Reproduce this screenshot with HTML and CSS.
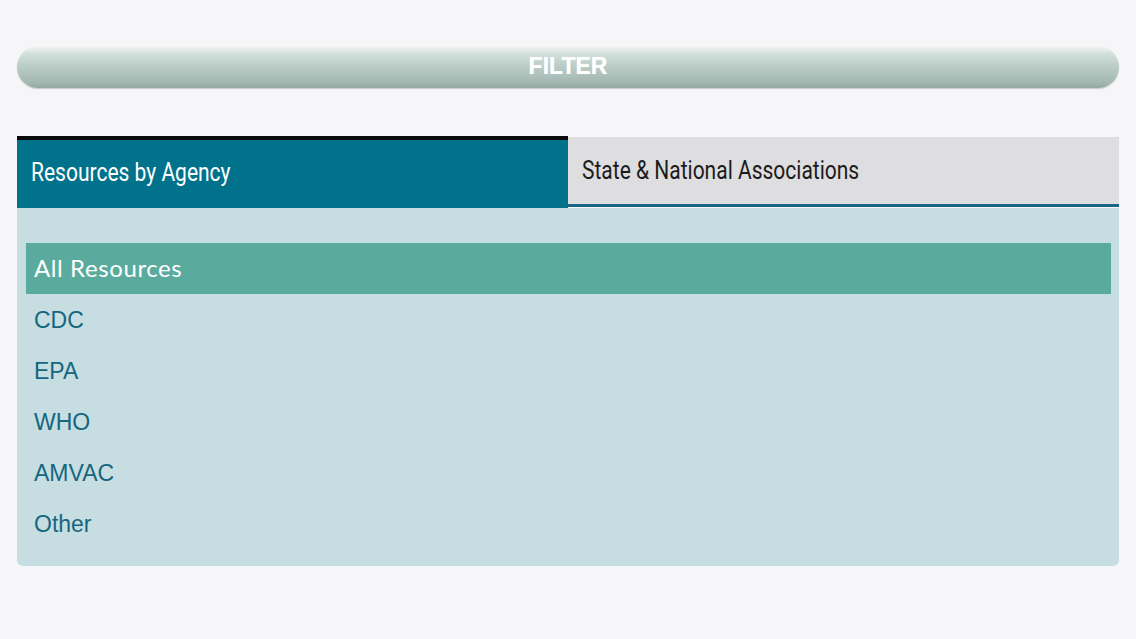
FILE: index.html
```html
<!DOCTYPE html>
<html lang="en">
<head>
<meta charset="utf-8">
<title>Filter</title>
<link rel="stylesheet" href="styles.css">
</head>
<body>
<div class="page">
  <div class="filter-bar">FILTER</div>
  <div class="tabs">
    <div class="tab tab-active"><span class="tab-label">Resources by Agency</span></div>
    <div class="tab tab-inactive"><span class="tab-label">State &amp; National Associations</span></div>
  </div>
  <div class="panel">
    <ul class="list">
      <li class="item item-selected">All Resources</li>
      <li class="item">CDC</li>
      <li class="item">EPA</li>
      <li class="item">WHO</li>
      <li class="item">AMVAC</li>
      <li class="item">Other</li>
    </ul>
  </div>
</div>
</body>
</html>
```
FILE: styles.css
```css
html, body {
  margin: 0;
  padding: 0;
  background: #f6f6f8;
}
.page {
  padding: 46px 17px 0 17px;
}
.filter-bar {
  height: 42px;
  border-radius: 21px;
  background: linear-gradient(to bottom, #f4f6f5 0%, #d3e0dc 18%, #b9cbc6 50%, #a5b8b2 85%, #94a8a2 100%);
  box-shadow: 0 1px 1px rgba(120,140,135,0.4);
  color: #ffffff;
  font-family: "Liberation Sans", Arial, sans-serif;
  font-weight: bold;
  font-size: 23px;
  display: flex;
  align-items: center;
  justify-content: center;
  padding-bottom: 2px;
  box-sizing: border-box;
  text-shadow: 0 0 1px rgba(255,255,255,0.6);
}
.tabs {
  margin-top: 48px;
  display: flex;
  height: 72px;
}
.tab {
  flex: 1;
  display: flex;
  align-items: center;
  font-family: "Roboto", sans-serif;
  font-size: 25px;
  box-sizing: border-box;
  overflow: hidden;
}
.tab-label {
  display: inline-block;
  white-space: nowrap;
  transform: scaleX(0.84);
  transform-origin: left center;
}
.tab-active {
  background: #01728b;
  border-top: 4px solid #0a0a0a;
  color: #ffffff;
  padding-left: 14px;
  padding-bottom: 4px;
}
.tab-inactive {
  margin-top: 1px;
  background: #dedddf;
  color: #1b1b1b;
  padding-left: 14px;
  border-bottom: 3px solid #1b6584;
  height: 70px;
}
.panel {
  background: #c6dee1;
  border-radius: 0 0 6px 6px;
  padding: 35px 8px 17px 9px;
}
.list {
  list-style: none;
  margin: 0;
  padding: 0;
}
.item {
  height: 51px;
  display: flex;
  align-items: center;
  padding-left: 8px;
  padding-top: 1px;
  box-sizing: border-box;
  font-family: "Liberation Sans", Arial, sans-serif;
  font-size: 23px;
  color: #16667f;
}
.item-selected {
  background: #5aab9d;
  color: #ffffff;
  font-family: "Lato", sans-serif;
  font-size: 24px;
  letter-spacing: 0.6px;
  padding-top: 0;
  padding-bottom: 3px;
}
```
